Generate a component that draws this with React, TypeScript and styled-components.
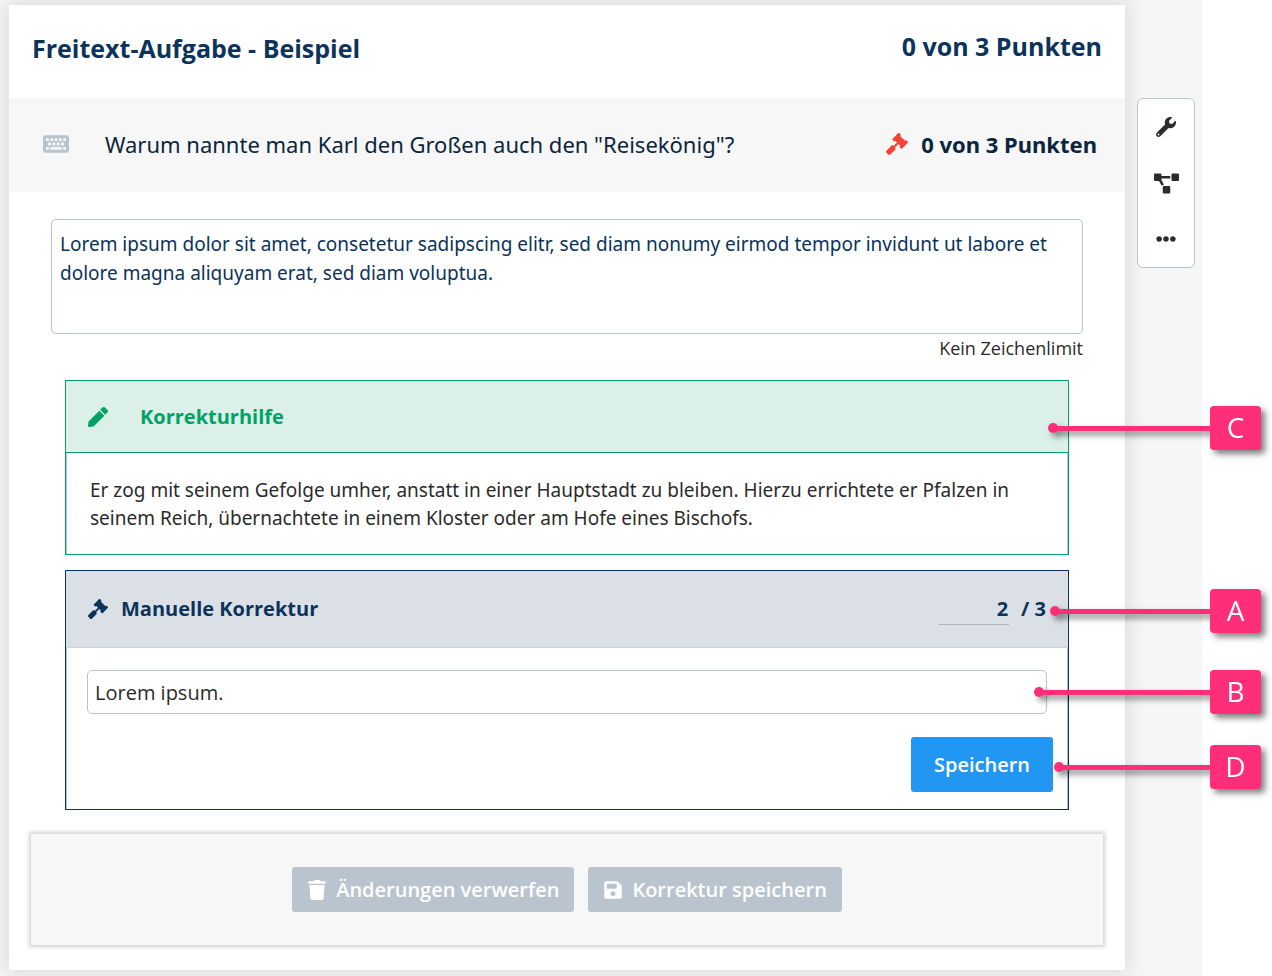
import React from "react";
import styled, { createGlobalStyle } from "styled-components";
import {
  FaKeyboard,
  FaGavel,
  FaWrench,
  FaProjectDiagram,
  FaEllipsisH,
  FaPen,
  FaTrash,
  FaSave,
} from "react-icons/fa";

const GlobalStyle = createGlobalStyle`
  *, *::before, *::after { box-sizing: border-box; }
  body {
    margin: 0;
    background: #fff;
    color: #2b2b2b;
    font-family: "Open Sans", "Noto Sans", sans-serif;
    font-size: 20px;
    line-height: 28px;
  }
  h1, h2, p { margin: 0; font-size: inherit; }
  button, input, textarea { font: inherit; color: inherit; }
`;

const reading = `"Noto Sans", "Open Sans", sans-serif`;
const navy = "#0b335b";
const ink = "#0b2540";
const green = "#00a266";
const line = "#bac4cf";
const pink = "#ff2e78";

const Workspace = styled.div`
  display: flex;
  align-items: flex-start;
  gap: 12px;
  margin-right: 70px;
  padding: 5px 7px 6px 9px;
  background: #f6f6f6;
`;

const Card = styled.main`
  flex: 1;
  min-width: 0;
  padding-bottom: 25px;
  background: #fff;
  box-shadow: 0 0 18px 4px rgba(0, 0, 0, 0.1);
`;

const CardHeader = styled.header`
  display: flex;
  justify-content: space-between;
  align-items: flex-start;
  padding: 25px 23px 33px;
  color: ${navy};
  font-size: 25px;
  font-weight: 700;
  line-height: 33px;
`;

const Title = styled.h1`
  padding-top: 2px;
`;

const QuestionBar = styled.section`
  display: flex;
  align-items: center;
  height: 94px;
  padding: 0 28px 2px 34px;
  background: #f7f7f7;
  color: ${ink};
  font-family: ${reading};
  font-size: 22px;
`;

const KindIcon = styled.span`
  display: flex;
  width: 62px;
  color: ${line};
  font-size: 26px;
`;

const Question = styled.h2`
  flex: 1;
  font-weight: 400;
`;

const Points = styled.strong`
  display: flex;
  align-items: center;
  gap: 13px;
`;

const RedIcon = styled.span`
  display: flex;
  color: #f94235;
`;

const Body = styled.div`
  display: flex;
  flex-direction: column;
  padding: 27px 42px 0;
`;

const Answer = styled.textarea`
  display: block;
  width: 100%;
  height: 115px;
  padding: 10px 8px;
  border: 1px solid ${line};
  border-radius: 5px;
  outline: none;
  resize: none;
  overflow: hidden;
  background: #fff;
  color: ${navy};
  font-family: ${reading};
  font-size: 19px;
  line-height: 29px;
`;

const Limit = styled.p`
  margin-bottom: 18px;
  font-size: 18px;
  text-align: right;
`;

const Panel = styled.section<{ $color: string }>`
  margin: 0 14px 15px;
  border: 1px solid ${(p) => p.$color};
`;

const PanelHead = styled.header<{ $tone: "help" | "manual" }>`
  position: relative;
  display: flex;
  align-items: center;
  gap: ${(p) => (p.$tone === "help" ? 32 : 13)}px;
  height: ${(p) => (p.$tone === "help" ? 72 : 77)}px;
  padding: 0 22px;
  border-bottom: 1px solid ${(p) => (p.$tone === "help" ? green : "#cfd2d6")};
  background: ${(p) => (p.$tone === "help" ? "#daf0e8" : "#dbe0e7")};
  color: ${(p) => (p.$tone === "help" ? green : navy)};
  font-weight: 700;

  h2 { flex: 1; }
`;

const HelpText = styled.p`
  padding: 23px 24px 22px;
  box-shadow: inset 1px 0 #b5c3c0, inset -1px 0 #b5c3c0;
  font-family: ${reading};
  font-size: 19px;
`;

const Score = styled.label`
  display: flex;
  align-items: center;
  gap: 12px;
`;

const ScoreInput = styled.input`
  width: 70px;
  height: 32px;
  padding: 0 1px;
  border: 0;
  border-bottom: 1px solid #b3b5b8;
  outline: none;
  background: transparent;
  font-weight: 700;
  text-align: right;
`;

const ManualBody = styled.div`
  display: flex;
  flex-direction: column;
  padding: 22px 15px 17px 21px;
  box-shadow: inset 1px 0 #b5bfc9, inset -1px 0 #b5bfc9;
`;

const Field = styled.div`
  position: relative;
  margin: 0 6px 23px 0;
`;

const Comment = styled.input`
  display: block;
  width: 100%;
  height: 44px;
  padding: 0 7px;
  border: 1px solid ${line};
  border-radius: 5px;
  outline: none;
  background: #fff;
`;

const SaveWrap = styled.div`
  position: relative;
  align-self: flex-end;
`;

const SaveButton = styled.button`
  display: block;
  height: 55px;
  padding: 0 23px;
  border: 0;
  border-radius: 3px;
  background: #2196f3;
  color: #fff;
  font-weight: 600;
`;

const Footer = styled.footer`
  display: flex;
  justify-content: center;
  gap: 14px;
  margin: 9px 22px 0;
  padding: 33px 16px;
  background: #f7f7f7;
  box-shadow: 0 0 4px 2px rgba(0, 0, 0, 0.18);
`;

const FooterButton = styled.button`
  display: flex;
  align-items: center;
  gap: 9px;
  height: 45px;
  padding: 0 15px;
  border: 0;
  border-radius: 3px;
  background: ${line};
  color: #fff;
  font-weight: 600;
`;

const Tools = styled.nav`
  display: flex;
  flex-direction: column;
  width: 58px;
  margin-top: 93px;
  border: 1px solid ${line};
  border-radius: 6px;
  background: #fff;
  z-index: 1;
`;

const ToolButton = styled.button<{ $size?: number }>`
  display: flex;
  align-items: center;
  justify-content: center;
  height: 56px;
  padding: 0;
  border: 0;
  background: transparent;
  color: #2b2b2b;
  font-size: ${(p) => p.$size ?? 20}px;
`;

/* A marker whose dot sits on its target and whose letter stands in the page margin. */
const CalloutBox = styled.div<{ $inset: number; $reach: number; $top: number }>`
  position: absolute;
  z-index: 2;
  top: ${(p) => p.$top}px;
  left: calc(100% - ${(p) => p.$inset}px);
  right: -${(p) => p.$reach}px;
  display: flex;
  align-items: center;
  filter: drop-shadow(4px 4px 3px rgba(0, 0, 0, 0.5));
`;

const Dot = styled.span`
  width: 10px;
  height: 10px;
  border-radius: 50%;
  background: ${pink};
`;

const Leader = styled.span`
  flex: 1;
  height: 5px;
  margin-left: -3px;
  background: ${pink};
`;

const Letter = styled.span`
  width: 51px;
  height: 44px;
  border-radius: 4px;
  background: ${pink};
  color: #fff;
  font-size: 28px;
  font-weight: 400;
  line-height: 42px;
  text-align: center;
`;

function Callout(props: { letter: string; inset: number; reach: number; top: number }) {
  return (
    <CalloutBox $inset={props.inset} $reach={props.reach} $top={props.top}>
      <Dot />
      <Leader />
      <Letter>{props.letter}</Letter>
    </CalloutBox>
  );
}

export default function App() {
  return (
    <>
      <GlobalStyle />
      <Workspace>
        <Card>
          <CardHeader>
            <Title>Freitext-Aufgabe - Beispiel</Title>
            <span>0 von 3 Punkten</span>
          </CardHeader>
          <QuestionBar>
            <KindIcon><FaKeyboard /></KindIcon>
            <Question>Warum nannte man Karl den Großen auch den "Reisekönig"?</Question>
            <Points>
              <RedIcon><FaGavel /></RedIcon>
              0 von 3 Punkten
            </Points>
          </QuestionBar>
          <Body>
            <Answer
              aria-label="Antwort"
              spellCheck={false}
              defaultValue="Lorem ipsum dolor sit amet, consetetur sadipscing elitr, sed diam nonumy eirmod tempor invidunt ut labore et dolore magna aliquyam erat, sed diam voluptua."
            />
            <Limit>Kein Zeichenlimit</Limit>
            <Panel $color={green}>
              <PanelHead $tone="help">
                <FaPen />
                <h2>Korrekturhilfe</h2>
                <Callout letter="C" inset={20} reach={193} top={25} />
              </PanelHead>
              <HelpText>
                Er zog mit seinem Gefolge umher, anstatt in einer Hauptstadt zu bleiben. Hierzu
                errichtete er Pfalzen in seinem Reich, übernachtete in einem Kloster oder am Hofe
                eines Bischofs.
              </HelpText>
            </Panel>
            <Panel $color={navy}>
              <PanelHead $tone="manual">
                <FaGavel />
                <h2>Manuelle Korrektur</h2>
                <Score>
                  <ScoreInput aria-label="Punkte" defaultValue="2" />
                  <span>/ 3</span>
                </Score>
                <Callout letter="A" inset={18} reach={193} top={18} />
              </PanelHead>
              <ManualBody>
                <Field>
                  <Comment aria-label="Kommentar" defaultValue="Lorem ipsum." />
                  <Callout letter="B" inset={13} reach={214} top={0} />
                </Field>
                <SaveWrap>
                  <SaveButton type="button">Speichern</SaveButton>
                  <Callout letter="D" inset={-1} reach={208} top={8} />
                </SaveWrap>
              </ManualBody>
            </Panel>
          </Body>
          <Footer>
            <FooterButton type="button"><FaTrash />Änderungen verwerfen</FooterButton>
            <FooterButton type="button"><FaSave />Korrektur speichern</FooterButton>
          </Footer>
        </Card>
        <Tools aria-label="Werkzeuge">
          <ToolButton type="button" aria-label="Bearbeiten"><FaWrench /></ToolButton>
          <ToolButton type="button" aria-label="Struktur" $size={25}><FaProjectDiagram /></ToolButton>
          <ToolButton type="button" aria-label="Mehr"><FaEllipsisH /></ToolButton>
        </Tools>
      </Workspace>
    </>
  );
}
